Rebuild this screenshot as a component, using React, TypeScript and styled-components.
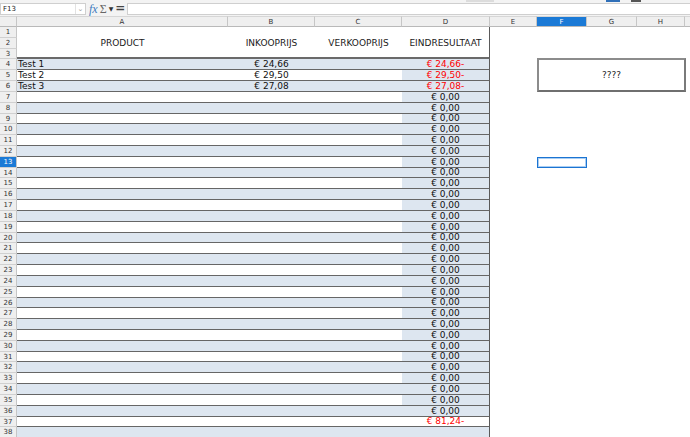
import React from 'react';
import styled, { createGlobalStyle } from 'styled-components';

const COLS = [17, 211, 87, 87, 88, 47, 50, 50, 48, 60];
const LETTERS = ['A', 'B', 'C', 'D', 'E', 'F', 'G', 'H', ''];
const ROW_COUNT = 38;
const ROW_H = 10.82;

// whole-pixel heights whose running total follows the fractional row pitch
const rowHeights = Array.from({ length: ROW_COUNT }, (_, i) =>
  Math.round((i + 1) * ROW_H) - Math.round(i * ROW_H)
);

const colTemplate = COLS.map((w) => `${w}px`).join(' ');
const rowTemplate = ['11px', ...rowHeights.map((h) => `${h}px`)].join(' ');

const SELECTED_ROW = 13;
const SELECTED_COL = 'F';

interface Line {
  name: string;
  price: string;
  result: string;
  negative: boolean;
}

const lines: Line[] = [
  { name: 'Test 1', price: '€ 24,66', result: '€ 24,66-', negative: true },
  { name: 'Test 2', price: '€ 29,50', result: '€ 29,50-', negative: true },
  { name: 'Test 3', price: '€ 27,08', result: '€ 27,08-', negative: true },
];

const GlobalStyle = createGlobalStyle`
  html, body {
    margin: 0;
    padding: 0;
    background: #ffffff;
  }
  body {
    font-family: "DejaVu Sans", "Liberation Sans", sans-serif;
  }
`;

const Page = styled.div`
  width: 690px;
  height: 437px;
  overflow: hidden;
  background: #ffffff;
  display: flex;
  flex-direction: column;
`;

const ToolStrip = styled.div`
  height: 2px;
  flex: none;
  display: flex;
  background: #f3f3f3;
  overflow: hidden;
`;

const StripBit = styled.span<{ $left: number; $width: number; $color: string }>`
  margin-left: ${(p) => p.$left}px;
  width: ${(p) => p.$width}px;
  height: 2px;
  background: ${(p) => p.$color};
`;

const FormulaBar = styled.div`
  height: 14px;
  flex: none;
  display: flex;
  align-items: flex-start;
  background: #f3f3f3;
  box-sizing: border-box;
  padding-top: 1px;
`;

const NameBox = styled.div`
  width: 86px;
  height: 12px;
  box-sizing: border-box;
  background: #ffffff;
  border: 1px solid #cfcfcf;
  display: flex;
  align-items: center;
  justify-content: space-between;
  font-size: 7px;
  color: #222;
  padding-left: 2px;
`;

const NameDrop = styled.span`
  width: 9px;
  height: 10px;
  display: flex;
  align-items: center;
  justify-content: center;
  border-left: 1px solid #e2e2e2;
  color: #9a9a9a;
  font-size: 7px;
`;

const FxIcon = styled.span`
  font-family: "Liberation Serif", "DejaVu Serif", serif;
  font-style: italic;
  font-size: 12px;
  line-height: 12px;
  color: #3d7cc0;
  margin-left: 3px;
`;

const SigmaIcon = styled.span`
  font-family: "Liberation Serif", "DejaVu Serif", serif;
  font-size: 12px;
  line-height: 12px;
  color: #666;
  margin-left: 2px;
`;

const CaretIcon = styled.span`
  font-size: 6px;
  line-height: 12px;
  color: #333;
  margin-left: 2px;
`;

const EqualsIcon = styled.span`
  font-size: 12px;
  line-height: 11px;
  font-weight: bold;
  color: #444;
  margin-left: 2px;
`;

const FormulaInput = styled.div`
  flex: 1;
  height: 12px;
  margin-left: 2px;
  box-sizing: border-box;
  background: #ffffff;
  border: 1px solid #cfcfcf;
  border-right: none;
`;

const Sheet = styled.div`
  position: relative;
  flex: none;
  display: grid;
  grid-template-columns: ${colTemplate};
  grid-template-rows: ${rowTemplate};
  font-size: 9px;
  color: #111;
`;

const Corner = styled.div`
  background: #efefef;
  border-right: 1px solid #c6c6c6;
  border-bottom: 1px solid #b9b9b9;
  border-top: 1px solid #d6d6d6;
  box-sizing: border-box;
`;

const ColHeader = styled.div<{ $active?: boolean }>`
  box-sizing: border-box;
  background: ${(p) => (p.$active ? '#1b7ad6' : '#efefef')};
  color: ${(p) => (p.$active ? '#ffffff' : '#333')};
  border-right: 1px solid #c6c6c6;
  border-bottom: 1px solid #b9b9b9;
  border-top: 1px solid #d6d6d6;
  font-size: 7px;
  display: flex;
  align-items: center;
  justify-content: center;
`;

const RowHeader = styled.div<{ $active?: boolean }>`
  box-sizing: border-box;
  background: ${(p) => (p.$active ? '#1b7ad6' : '#efefef')};
  color: ${(p) => (p.$active ? '#ffffff' : '#333')};
  border-right: 1px solid #c6c6c6;
  border-bottom: 1px solid #d0d0d0;
  font-size: 7px;
  display: flex;
  align-items: center;
  justify-content: center;
`;

const TitleCell = styled.div<{ $last?: boolean }>`
  grid-row: span 3;
  box-sizing: border-box;
  border-bottom: 2px solid #6a6a6a;
  border-right: ${(p) => (p.$last ? '1px solid #5a5a5a' : 'none')};
  display: flex;
  align-items: center;
  justify-content: center;
  font-size: 9px;
  color: #1a1a1a;
  padding-top: 1px;
`;

const DataCell = styled.div<{
  $fill?: boolean;
  $align?: 'left' | 'center';
  $negative?: boolean;
  $last?: boolean;
}>`
  box-sizing: border-box;
  background: ${(p) => (p.$fill ? '#dde6f0' : '#ffffff')};
  border-bottom: 1px solid #666;
  border-right: ${(p) => (p.$last ? '1px solid #5a5a5a' : 'none')};
  color: ${(p) => (p.$negative ? '#ff0000' : '#111')};
  display: flex;
  align-items: center;
  justify-content: ${(p) => (p.$align === 'left' ? 'flex-start' : 'center')};
  padding-left: ${(p) => (p.$align === 'left' ? '1px' : '0')};
  white-space: nowrap;
  overflow: hidden;
  line-height: 1;
`;

const BlankCell = styled.div<{ $selected?: boolean }>`
  box-sizing: border-box;
  background: #ffffff;
  border: ${(p) => (p.$selected ? '1px solid #1b74d2' : 'none')};
  box-shadow: ${(p) => (p.$selected ? 'inset 0 0 0 1px #a9cdf2' : 'none')};
`;

const NoteBox = styled.div`
  position: absolute;
  left: 537px;
  top: 42px;
  width: 149px;
  height: 34px;
  box-sizing: border-box;
  border: 2px solid #8c8c8c;
  border-right-color: #7a7a7a;
  border-bottom-color: #6f6f6f;
  background: #ffffff;
  display: flex;
  align-items: center;
  justify-content: center;
  font-size: 9px;
  color: #222;
`;

function blanks(row: number) {
  return LETTERS.slice(4).map((l, i) => (
    <BlankCell key={i} $selected={row === SELECTED_ROW && l === SELECTED_COL} />
  ));
}

function DataRow({ row }: { row: number }) {
  const idx = row - 4;
  const line = lines[idx];
  const stripe = row % 2 === 0;
  let result = '';
  let negative = false;
  if (line) {
    result = line.result;
    negative = line.negative;
  } else if (row <= 36) {
    result = '€ 0,00';
  } else if (row === 37) {
    result = '€ 81,24-';
    negative = true;
  }
  const resultFill = row !== 37;

  return (
    <>
      <RowHeader $active={row === SELECTED_ROW}>{row}</RowHeader>
      <DataCell $fill={stripe} $align="left">{line ? line.name : ''}</DataCell>
      <DataCell $fill={stripe}>{line ? line.price : ''}</DataCell>
      <DataCell $fill={stripe} />
      <DataCell $fill={resultFill} $negative={negative} $last>
        {result}
      </DataCell>
      {blanks(row)}
    </>
  );
}

function App() {
  const dataRows = [];
  for (let r = 4; r <= ROW_COUNT; r++) {
    dataRows.push(<DataRow key={r} row={r} />);
  }

  return (
    <Page>
      <GlobalStyle />
      <ToolStrip>
        <StripBit $left={466} $width={28} $color="#dcdcdc" />
        <StripBit $left={112} $width={14} $color="#2f6fb8" />
        <StripBit $left={11} $width={10} $color="#555555" />
      </ToolStrip>
      <FormulaBar>
        <NameBox>
          F13
          <NameDrop>⌄</NameDrop>
        </NameBox>
        <FxIcon>fx</FxIcon>
        <SigmaIcon>Σ</SigmaIcon>
        <CaretIcon>▼</CaretIcon>
        <EqualsIcon>=</EqualsIcon>
        <FormulaInput />
      </FormulaBar>
      <Sheet>
        <Corner />
        {LETTERS.map((l, i) => (
          <ColHeader key={i} $active={l === SELECTED_COL}>
            {l}
          </ColHeader>
        ))}

        <RowHeader>1</RowHeader>
        <TitleCell>PRODUCT</TitleCell>
        <TitleCell>INKOOPRIJS</TitleCell>
        <TitleCell>VERKOOPRIJS</TitleCell>
        <TitleCell $last>EINDRESULTAAT</TitleCell>
        {blanks(1)}
        <RowHeader>2</RowHeader>
        {blanks(2)}
        <RowHeader>3</RowHeader>
        {blanks(3)}

        {dataRows}

        <NoteBox>????</NoteBox>
      </Sheet>
    </Page>
  );
}

export default App;
